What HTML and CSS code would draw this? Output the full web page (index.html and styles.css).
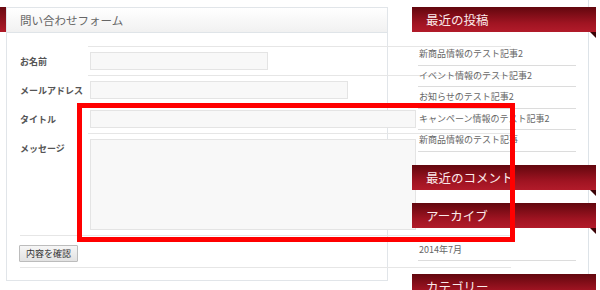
FILE: index.html
```html
<!DOCTYPE html>
<html lang="ja">
<head>
    <meta charset="UTF-8">
    <title>お問い合わせ</title>
    <link rel="stylesheet" href="styles.css">
</head>
<body>
    <div class="page">
        <div class="main">
            <div class="accent"></div>
            <div class="box">
                <div class="box-head">問い合わせフォーム</div>
                <table class="form">
                    <tr>
                        <th>お名前</th>
                        <td><input type="text" class="in-name"></td>
                    </tr>
                    <tr>
                        <th>メールアドレス</th>
                        <td><input type="text" class="in-mail"></td>
                    </tr>
                    <tr>
                        <th>タイトル</th>
                        <td><input type="text" class="in-title"></td>
                    </tr>
                    <tr>
                        <th class="top">メッセージ</th>
                        <td><textarea class="in-msg"></textarea></td>
                    </tr>
                    <tr>
                        <td colspan="2" class="actions"><button type="button">内容を確認</button></td>
                    </tr>
                </table>
            </div>
        </div>

        <aside class="side">
            <h2 class="side-head">最近の投稿</h2>
            <ul class="side-list">
                <li>新商品情報のテスト記事2</li>
                <li>イベント情報のテスト記事2</li>
                <li>お知らせのテスト記事2</li>
                <li>キャンペーン情報のテスト記事2</li>
                <li>新商品情報のテスト記事</li>
            </ul>
            <h2 class="side-head">最近のコメント</h2>
            <h2 class="side-head">アーカイブ</h2>
            <ul class="side-list">
                <li>2014年7月</li>
            </ul>
            <h2 class="side-head">カテゴリー</h2>
        </aside>
    </div>

    <div class="mark"></div>
</body>
</html>
```

FILE: styles.css
```css
body {
    margin: 0;
    background-color: #fff;
    font-family: "Noto Sans CJK JP", "Liberation Sans", sans-serif;
    color: #555;
    overflow: hidden;
}

.page {
    display: flex;
    align-items: flex-start;
    height: 290px;
}

/* main column */
.main {
    display: flex;
    align-items: flex-start;
    margin-top: 7px;
}

.accent {
    width: 6px;
    height: 25px;
    background: linear-gradient(#6a0a12, #b01a28);
}

.box {
    width: 382px;
    height: 274px;
    box-sizing: border-box;
    border: 1px solid #e1e5e9;
}

.box-head {
    height: 24px;
    line-height: 24px;
    padding-left: 13px;
    font-size: 11.5px;
    color: #666;
    background: linear-gradient(#fff, #f1f1f1);
    border-bottom: 1px solid #dfe4e8;
}

.form {
    border-collapse: collapse;
    width: 491px;
    margin: 13px 0 0 13px;
}

.form th {
    width: 68px;
    padding: 0;
    text-align: left;
    font-size: 9px;
    font-weight: bold;
    color: #555;
    vertical-align: middle;
}

.form th.top {
    vertical-align: top;
    padding-top: 8px;
}

.form td {
    padding: 5px 2px;
    border-top: 1px solid #e6e6e6;
}

.form input,
.form textarea {
    display: block;
    height: 18px;
    box-sizing: border-box;
    margin: 0;
    background-color: #f8f8f8;
    border: 1px solid #e4e4e4;
}

.in-name {
    width: 178px;
}

.in-mail {
    width: 258px;
}

.in-title {
    width: 326px;
}

.form textarea {
    width: 326px;
    height: 91px;
    resize: none;
}

.form td.actions {
    padding: 9px 0 5px 0;
    border-bottom: 1px solid #e6e6e6;
}

.actions button {
    display: block;
    height: 17px;
    padding: 0 6px;
    margin-left: -1px;
    font-family: inherit;
    font-size: 9px;
    color: #333;
    background: linear-gradient(#f6f6f6, #e2e2e2);
    border: 1px solid #bcbcbc;
    border-radius: 1px;
}

/* sidebar */
.side {
    width: 177px;
    height: 290px;
    margin-left: 24px;
    padding-top: 7px;
    box-sizing: border-box;
    border-right: 1px solid #dde3e8;
}

.side-head {
    position: relative;
    width: 184px;
    height: 25px;
    margin: 0 0 13px 0;
    padding-left: 14px;
    box-sizing: border-box;
    line-height: 25px;
    font-size: 12.5px;
    font-weight: normal;
    color: #fbeaea;
    background: linear-gradient(#62070e, #a01422 65%, #b21b2a);
}

.side-head::after {
    content: "";
    position: absolute;
    right: 0;
    bottom: -6px;
    border-top: 6px solid #3b0306;
    border-left: 6px solid transparent;
}

.side-list {
    list-style: none;
    width: 158px;
    margin: -1px 0 13px 6px;
    padding: 0;
}

.side-list li {
    line-height: 20.5px;
    padding-left: 1px;
    font-size: 9px;
    color: #666;
    border-bottom: 1px solid #dcdcdc;
}

/* annotation frame */
.mark {
    position: absolute;
    left: 77px;
    top: 103px;
    width: 438px;
    height: 139px;
    box-sizing: border-box;
    border: 5px solid #ff0000;
}
```
